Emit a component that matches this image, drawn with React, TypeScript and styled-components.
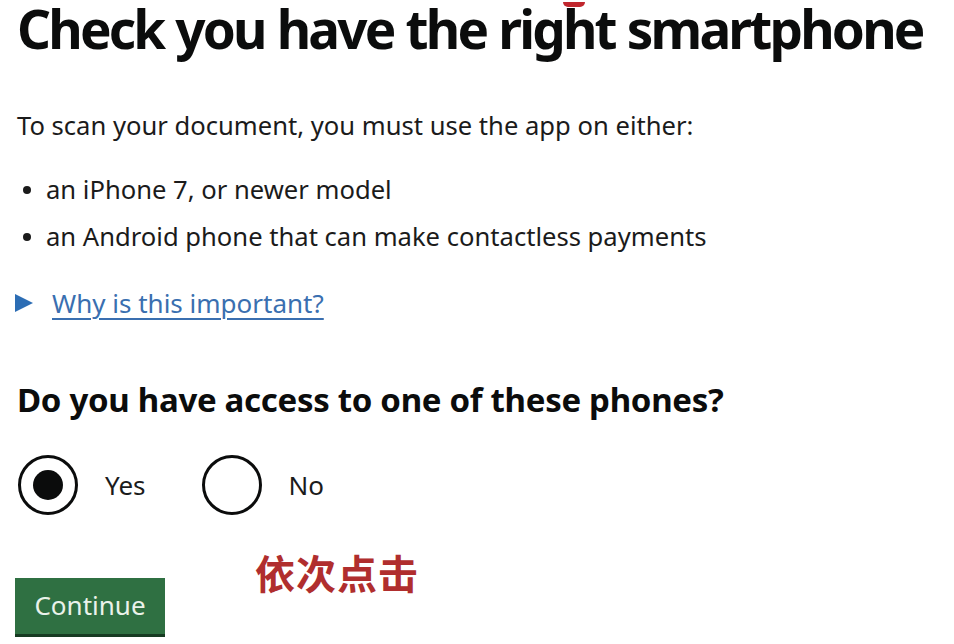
import React from "react";
import styled, { createGlobalStyle } from "styled-components";

const Global = createGlobalStyle`
  html, body { margin: 0; padding: 0; background: #ffffff; }
  body { font-family: "Noto Sans", "Liberation Sans", sans-serif; color: #0b0c0c; }
`;

const Page = styled.main`
  position: relative;
  width: 954px;
  height: 644px;
  overflow: hidden;
  padding: 0 0 0 17px;
  box-sizing: border-box;
`;

const Heading = styled.h1`
  margin: 0;
  font-size: 53px;
  line-height: 58px;
  font-weight: 700;
  letter-spacing: -2.8px;
  word-spacing: 1px;
  white-space: nowrap;
  color: #0b0c0c;
`;

const Mark = styled.span`
  position: absolute;
  left: 563px;
  top: 2px;
  width: 22px;
  height: 5px;
  background: #c0262d;
  border-radius: 0 0 12px 12px;
`;

const Para = styled.p`
  margin: 50px 0 0;
  font-size: 25.6px;
  line-height: 36px;
  color: #1b1b1b;
`;

const List = styled.ul`
  margin: 28px 0 0;
  padding: 0;
  list-style: none;
  display: flex;
  flex-direction: column;
  gap: 11px;
`;

const Item = styled.li`
  display: flex;
  align-items: center;
  gap: 15px;
  font-size: 25.6px;
  line-height: 36px;
  color: #1b1b1b;
  &::before {
    content: "";
    width: 8px;
    height: 8px;
    margin-left: 6px;
    border-radius: 50%;
    background: #1b1b1b;
  }
`;

const Details = styled.div`
  margin-top: 30px;
  display: flex;
  align-items: center;
  gap: 19px;
  margin-left: -2px;
`;

const Arrow = styled.span`
  width: 0;
  height: 0;
  border-top: 9px solid transparent;
  border-bottom: 9px solid transparent;
  border-left: 18px solid #2c6db4;
`;

const Summary = styled.a`
  font-size: 26px;
  line-height: 36px;
  color: #3a6fb0;
  text-decoration: underline;
  text-decoration-thickness: 2px;
  text-underline-offset: 5px;
`;

const Question = styled.h2`
  margin: 59px 0 0;
  font-size: 33px;
  line-height: 40px;
  font-weight: 700;
  letter-spacing: -0.3px;
  color: #0b0c0c;
`;

const Radios = styled.div`
  margin-top: 35px;
  display: flex;
  align-items: center;
  gap: 56px;
  margin-left: 1px;
`;

const Option = styled.label`
  display: flex;
  align-items: center;
  gap: 27px;
  font-size: 26px;
  color: #1b1b1b;
`;

const Circle = styled.span<{ $checked?: boolean }>`
  width: 60px;
  height: 60px;
  box-sizing: border-box;
  border: 3px solid #0b0c0c;
  border-radius: 50%;
  display: flex;
  align-items: center;
  justify-content: center;
  &::after {
    content: "";
    width: 30px;
    height: 30px;
    border-radius: 50%;
    background: #0b0c0c;
    display: ${(p) => (p.$checked ? "block" : "none")};
  }
`;

const Bottom = styled.div`
  margin-top: 35px;
  display: flex;
  align-items: flex-start;
  margin-left: -2px;
`;

const Button = styled.button`
  margin-top: 28px;
  width: 150px;
  height: 56px;
  border: 0;
  border-radius: 0;
  background: #2f7042;
  box-shadow: 0 3px 0 #173a22;
  color: #eaf2ea;
  font-family: "Noto Sans", "Liberation Sans", sans-serif;
  font-size: 26px;
  padding: 0 0 2px;
`;

const Note = styled.div`
  margin-left: 90px;
  font-family: "Noto Sans CJK SC", sans-serif;
  font-weight: 700;
  font-size: 40px;
  line-height: 44px;
  letter-spacing: 1px;
  color: #b02e2e;
`;

export default function App() {
  return (
    <>
      <Global />
      <Page>
        <Mark />
        <Heading>Check you have the right smartphone</Heading>
        <Para>To scan your document, you must use the app on either:</Para>
        <List>
          <Item>an iPhone 7, or newer model</Item>
          <Item>an Android phone that can make contactless payments</Item>
        </List>
        <Details>
          <Arrow />
          <Summary href="#">Why is this important?</Summary>
        </Details>
        <Question>Do you have access to one of these phones?</Question>
        <Radios>
          <Option>
            <Circle $checked />
            Yes
          </Option>
          <Option>
            <Circle />
            No
          </Option>
        </Radios>
        <Bottom>
          <Button>Continue</Button>
          <Note>依次点击</Note>
        </Bottom>
      </Page>
    </>
  );
}
